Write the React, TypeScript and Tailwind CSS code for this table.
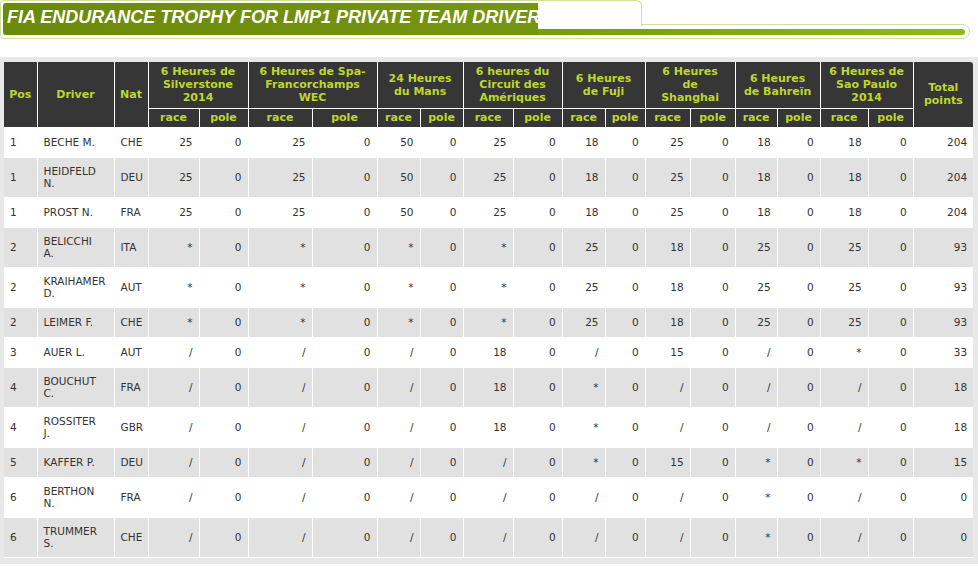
import React from 'react';

const colClasses = [
  'w-[33px]', 'w-[77px]', 'w-[34px]',
  'w-[51px]', 'w-[49px]',
  'w-[64px]', 'w-[65px]',
  'w-[43px]', 'w-[43px]',
  'w-[50px]', 'w-[49px]',
  'w-[43px]', 'w-[40px]',
  'w-[45px]', 'w-[45px]',
  'w-[42px]', 'w-[43px]',
  'w-[48px]', 'w-[45px]',
  'w-[60px]',
];

const races = [
  ['6 Heures de', 'Silverstone', '2014'],
  ['6 Heures de Spa-', 'Francorchamps', 'WEC'],
  ['24 Heures', 'du Mans'],
  ['6 heures du', 'Circuit des', 'Amériques'],
  ['6 Heures', 'de Fuji'],
  ['6 Heures', 'de', 'Shanghai'],
  ['6 Heures', 'de Bahreïn'],
  ['6 Heures de', 'Sao Paulo', '2014'],
];

type Row = { pos: string; driver: string[]; nat: string; pts: string[]; total: string };

const rows: Row[] = [
  { pos: '1', driver: ['BECHE M.'], nat: 'CHE', pts: ['25', '25', '50', '25', '18', '25', '18', '18'], total: '204' },
  { pos: '1', driver: ['HEIDFELD', 'N.'], nat: 'DEU', pts: ['25', '25', '50', '25', '18', '25', '18', '18'], total: '204' },
  { pos: '1', driver: ['PROST N.'], nat: 'FRA', pts: ['25', '25', '50', '25', '18', '25', '18', '18'], total: '204' },
  { pos: '2', driver: ['BELICCHI', 'A.'], nat: 'ITA', pts: ['*', '*', '*', '*', '25', '18', '25', '25'], total: '93' },
  { pos: '2', driver: ['KRAIHAMER', 'D.'], nat: 'AUT', pts: ['*', '*', '*', '*', '25', '18', '25', '25'], total: '93' },
  { pos: '2', driver: ['LEIMER F.'], nat: 'CHE', pts: ['*', '*', '*', '*', '25', '18', '25', '25'], total: '93' },
  { pos: '3', driver: ['AUER L.'], nat: 'AUT', pts: ['/', '/', '/', '18', '/', '15', '/', '*'], total: '33' },
  { pos: '4', driver: ['BOUCHUT', 'C.'], nat: 'FRA', pts: ['/', '/', '/', '18', '*', '/', '/', '/'], total: '18' },
  { pos: '4', driver: ['ROSSITER', 'J.'], nat: 'GBR', pts: ['/', '/', '/', '18', '*', '/', '/', '/'], total: '18' },
  { pos: '5', driver: ['KAFFER P.'], nat: 'DEU', pts: ['/', '/', '/', '/', '*', '15', '*', '*'], total: '15' },
  { pos: '6', driver: ['BERTHON', 'N.'], nat: 'FRA', pts: ['/', '/', '/', '/', '/', '/', '*', '/'], total: '0' },
  { pos: '6', driver: ['TRUMMER', 'S.'], nat: 'CHE', pts: ['/', '/', '/', '/', '/', '/', '*', '/'], total: '0' },
];

function TitleBar() {
  return (
    <div className="relative h-[40px] bg-white">
      {/* long strip outline */}
      <div className="absolute left-0 top-[24px] w-[970px] h-[15px] border border-[#cde39a] rounded-r-[8px] rounded-bl-[4px]" />
      {/* tab outline */}
      <div className="absolute left-0 top-0 w-[642px] h-[26px] border border-b-0 border-[#cde39a] rounded-t-[4px] rounded-tr-[6px] bg-white" />
      {/* thick green bar */}
      <div className="absolute left-[536px] top-[29px] w-[429px] h-[6px] rounded-r-full bg-gradient-to-r from-[#769c0f] to-[#8dbb19]" />
      {/* title box */}
      <div className="absolute left-[3px] top-[3px] w-[535px] h-[32px] overflow-hidden rounded-l-[3px] bg-gradient-to-r from-[#6b8a0a] to-[#769611] pt-[5px] pl-[4px]">
        <div className="whitespace-nowrap text-[18px] leading-[18px] font-bold italic text-white font-['Liberation_Sans',Arial,sans-serif]">
          FIA ENDURANCE TROPHY FOR LMP1 PRIVATE TEAM DRIVERS
        </div>
      </div>
    </div>
  );
}

export default function App() {
  return (
    <div className="w-[978px] h-[566px] overflow-hidden bg-white font-['DejaVu_Sans',Verdana,sans-serif]">
      <TitleBar />
      <div className="mt-[17px] bg-[#e8e8e8] pt-[5px] pl-[4px] pr-[5px] pb-[6px]">
        <table className="table-fixed border-collapse w-[969px]">
          <colgroup>
            {colClasses.map((c, i) => (
              <col key={i} className={c} />
            ))}
          </colgroup>
          <thead className="bg-[#363636] text-[#bed62f] text-[11px] leading-[13px] font-bold">
            <tr className="h-[46px]">
              <th rowSpan={2} className="border border-white border-t-0 border-l-0 text-center">Pos</th>
              <th rowSpan={2} className="border border-white border-t-0 text-center">Driver</th>
              <th rowSpan={2} className="border border-white border-t-0 text-center">Nat</th>
              {races.map((r, i) => (
                <th key={i} colSpan={2} className="border border-white border-t-0 text-center px-[2px]">
                  {r.map((line, j) => (
                    <div key={j}>{line}</div>
                  ))}
                </th>
              ))}
              <th rowSpan={2} className="border border-white border-t-0 border-r-0 text-center rounded-tr-[3px]">
                Total<br />points
              </th>
            </tr>
            <tr className="h-[19px]">
              {races.map((_, i) => (
                <React.Fragment key={i}>
                  <th className="border border-white text-center">race</th>
                  <th className="border border-white text-center">pole</th>
                </React.Fragment>
              ))}
            </tr>
          </thead>
          <tbody className="text-[10.5px] leading-[12px] text-[#333333]">
            {rows.map((row, i) => (
              <tr
                key={i}
                className={`${row.driver.length > 1 ? 'h-[40px]' : 'h-[30px]'} ${i % 2 === 0 ? 'bg-white' : 'bg-[#e1e1e1]'}`}
              >
                <td className="border border-white border-l-0 pl-[6px]">{row.pos}</td>
                <td className="border border-white pl-[6px] whitespace-nowrap">
                  {row.driver.map((d, j) => (
                    <div key={j}>{d}</div>
                  ))}
                </td>
                <td className="border border-white pl-[6px]">{row.nat}</td>
                {row.pts.map((p, j) => (
                  <React.Fragment key={j}>
                    <td className="border border-white text-right pr-[6px]">{p}</td>
                    <td className="border border-white text-right pr-[6px]">0</td>
                  </React.Fragment>
                ))}
                <td className="border border-white border-r-0 text-right pr-[6px]">{row.total}</td>
              </tr>
            ))}
          </tbody>
        </table>
      </div>
    </div>
  );
}
